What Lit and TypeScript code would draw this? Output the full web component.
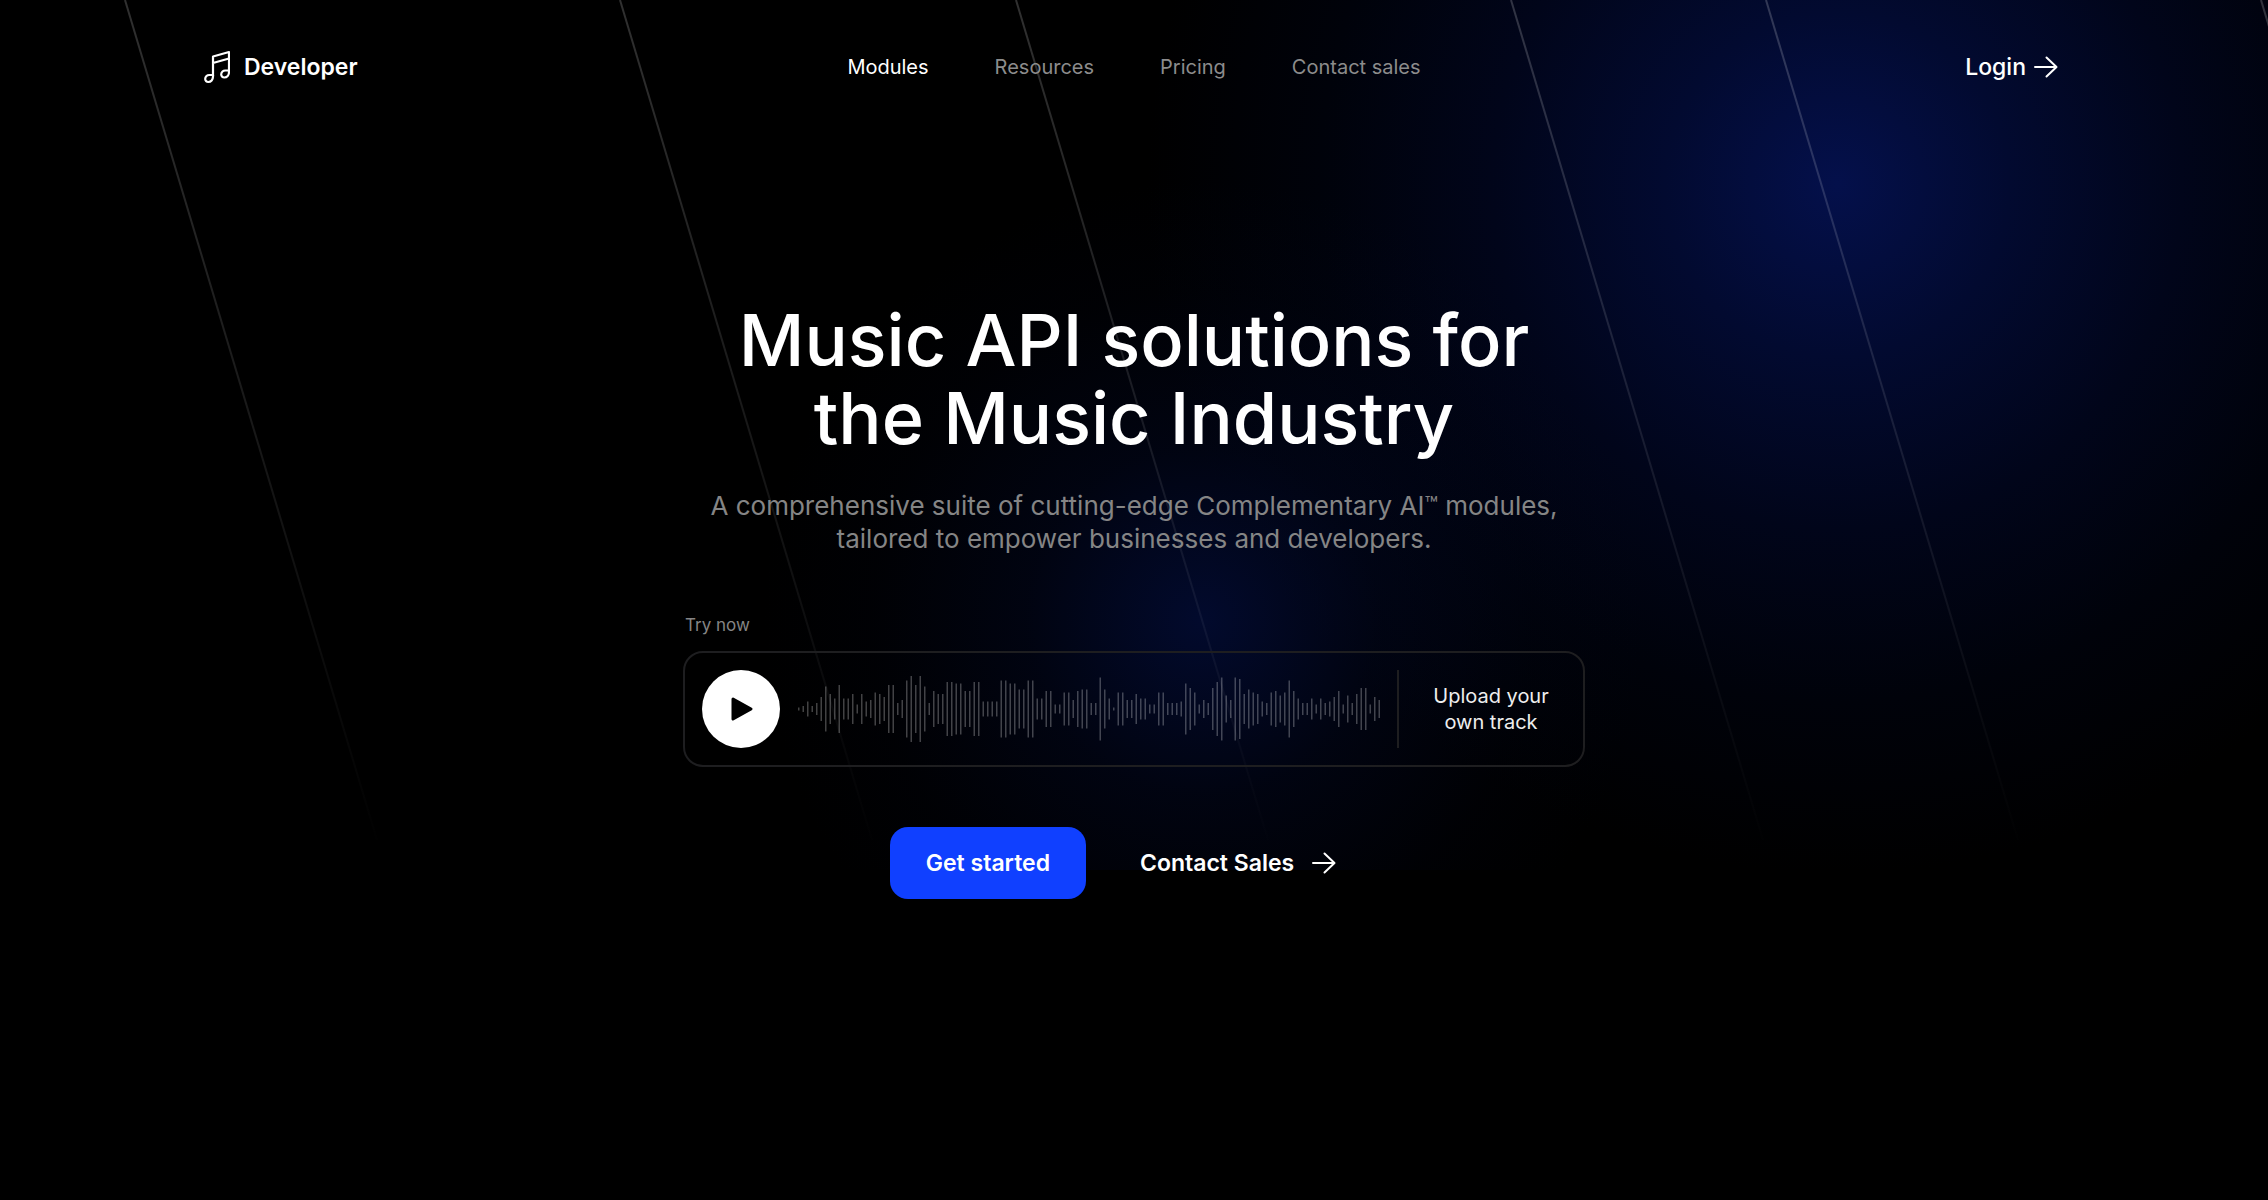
import { LitElement, html, css, svg } from "lit";
import { customElement } from "lit/decorators.js";

const NAV_ITEMS = ["Modules", "Resources", "Pricing", "Contact sales"];

/* Half-heights of the sample track's bars. */
const WAVE = [
  1, 2, 5, 2, 4, 8, 15, 10, 7, 16, 7, 7, 10, 3, 10, 5, 6, 11, 10, 8, 16, 16, 4, 6, 19, 22,
  16, 22, 15, 4, 12, 10, 10, 18, 18, 17, 17, 12, 12, 18, 18, 5, 5, 5, 5, 19, 19, 17, 17, 13,
  13, 19, 19, 7, 7, 12, 12, 3, 3, 11, 11, 6, 12, 13, 13, 4, 4, 21, 13, 7, 1, 11, 11, 6, 6,
  10, 7, 7, 3, 3, 11, 11, 4, 4, 4, 5, 17, 14, 11, 3, 6, 4, 14, 18, 21, 9, 6, 21, 20, 10, 13,
  11, 10, 5, 4, 11, 12, 9, 11, 19, 12, 7, 4, 4, 7, 3, 7, 4, 5, 8, 12, 3, 9, 4, 10, 14, 14, 3,
  8, 6,
];

/* Where each slanted backdrop line meets the top edge. */
const RAYS = [125, 620, 1016, 1511, 1766, 2261];

const arrow = html`<svg class="arrow" viewBox="0 0 36 36" aria-hidden="true">
  <path d="M7 18H28M18.500 8.500L28.500 18L18.500 27.500" fill="none" stroke="currentColor"
    stroke-width="2" stroke-linecap="round" stroke-linejoin="round" />
</svg>`;

@customElement("app-root")
export class AppRoot extends LitElement {
  static styles = css`
    :host {
      display: block;
      font-family: Inter, "Liberation Sans", sans-serif;
      color: #fff;
      background: #000;
    }
    .page {
      position: relative;
      min-height: 100vh;
      overflow: hidden;
    }
    .backdrop {
      position: absolute;
      inset: 0 0 auto 0;
      height: 870px;
      background:
        radial-gradient(circle 440px at 53% 620px, rgba(4, 20, 90, 0.5), rgba(3, 14, 64, 0.26) 40%, rgba(2, 8, 40, 0.1) 75%, transparent),
        radial-gradient(circle 690px at 81% 184px, #04104b, #020a30 25%, #01051a 50%, #00020a 75%, transparent);
    }
    .rays {
      position: absolute;
      top: 0;
      left: 0;
      width: 100%;
      height: 840px;
    }
    .content {
      position: relative;
    }
    .header {
      display: grid;
      grid-template-columns: 1fr auto 1fr;
      align-items: center;
      padding: 49px 204px;
    }
    a {
      color: inherit;
      text-decoration: none;
    }
    .brand {
      display: flex;
      align-items: center;
      gap: 14px;
      font-size: 23px;
      font-weight: 600;
      line-height: 36px;
    }
    .note {
      width: 26px;
      height: 36px;
    }
    .nav {
      display: flex;
      gap: 66px;
      font-size: 20px;
      line-height: 36px;
      color: #8c8c8c;
    }
    .nav .active {
      color: #fff;
    }
    .login {
      justify-self: end;
      display: flex;
      align-items: center;
      gap: 2px;
      font-size: 23px;
      font-weight: 500;
    }
    .arrow {
      width: 36px;
      height: 36px;
    }
    .hero {
      display: flex;
      flex-direction: column;
      align-items: center;
      padding-top: 167px;
      text-align: center;
    }
    h1 {
      margin: 0;
      font-size: 72px;
      font-weight: 500;
      line-height: 78px;
    }
    .lead {
      margin: 32px 0 0;
      font-size: 26px;
      line-height: 33px;
      color: #858585;
    }
    .tm {
      font-size: 22px;
      line-height: 0;
      vertical-align: 3px;
    }
    .player {
      width: 902px;
      max-width: 100%;
      margin-top: 58px;
      text-align: left;
    }
    .label {
      margin: 0 0 14px 2px;
      font-size: 17px;
      line-height: 24px;
      color: #858585;
    }
    .card {
      display: flex;
      align-items: center;
      box-sizing: border-box;
      padding: 17px 0 17px 17px;
      border: 2px solid #1e1e20;
      border-radius: 20px;
    }
    button {
      padding: 0;
      border: 0;
      background: none;
      color: inherit;
      font: inherit;
      cursor: pointer;
    }
    .play {
      display: grid;
      place-items: center;
      flex: none;
      width: 78px;
      height: 78px;
      border-radius: 50%;
      background: #fff;
    }
    .play-icon {
      width: 36px;
      height: 36px;
    }
    .wave {
      flex: 1;
      min-width: 0;
      height: 78px;
      margin: 0 14px 0 18px;
    }
    .upload {
      flex: none;
      width: 186px;
      height: 78px;
      border-left: 2px solid #1e1e20;
      font-size: 20px;
      line-height: 26px;
      color: #eee;
      text-align: center;
    }
    .actions {
      display: flex;
      gap: 18px;
      margin-top: 60px;
      font-size: 23px;
      font-weight: 600;
      line-height: 36px;
    }
    .primary {
      padding: 18px 36px;
      border-radius: 18px;
      background: #1040ff;
    }
    .secondary {
      display: flex;
      align-items: center;
      gap: 12px;
      padding: 18px 36px;
    }
  `;

  render() {
    return html`
      <div class="page">
        <div class="backdrop"></div>
        <svg class="rays" aria-hidden="true">
          <defs>
            <linearGradient id="fade" gradientUnits="userSpaceOnUse" x1="0" y1="0" x2="0" y2="860">
              <stop offset="0" stop-color="#fff" stop-opacity="0.19" />
              <stop offset="1" stop-color="#fff" stop-opacity="0" />
            </linearGradient>
          </defs>
          ${RAYS.map((x) => svg`<path d="M${x} 0l252 840" stroke="url(#fade)" stroke-width="2" />`)}
        </svg>
        <div class="content">
          <header class="header">
            <a class="brand" href="#">
              <svg class="note" viewBox="0 0 26 36" fill="none" stroke="#fff" stroke-width="2.2"
                stroke-linejoin="round" aria-hidden="true">
                <path d="M9 27V7.500L25 3V22.500M9 14L25 9.500" />
                <path d="M9 26H5.500A4 4 0 0 0 1.200 30A3 3 0 0 0 4.300 33C7 33 9 30.800 9 27.500Z" />
                <path d="M25 21.500H21.500A4 4 0 0 0 17.200 25.500A3 3 0 0 0 20.300 28.500C23 28.500 25 26.300 25 23Z" />
              </svg>
              Developer
            </a>
            <nav class="nav">
              ${NAV_ITEMS.map((item, i) => html`<a class=${i === 0 ? "active" : ""} href="#">${item}</a>`)}
            </nav>
            <a class="login" href="#">Login ${arrow}</a>
          </header>
          <main class="hero">
            <h1>Music API solutions for<br />the Music Industry</h1>
            <p class="lead">
              A comprehensive suite of cutting-edge Complementary AI<span class="tm">™</span> modules,<br />tailored
              to empower businesses and developers.
            </p>
            <section class="player">
              <p class="label">Try now</p>
              <div class="card">
                <button class="play" aria-label="Play">
                  <svg class="play-icon" viewBox="0 0 36 36" aria-hidden="true">
                    <path d="M10 8L28 18L10 28Z" fill="#000" stroke="#000" stroke-width="3" stroke-linejoin="round" />
                  </svg>
                </button>
                <svg class="wave" viewBox="0 0 390 44" aria-hidden="true">
                  ${WAVE.map((h, i) => svg`<rect x=${i * 3} y=${22 - h} width="1" height=${h * 2} fill="#fff" fill-opacity="0.26" />`)}
                </svg>
                <button class="upload">Upload your<br />own track</button>
              </div>
            </section>
            <div class="actions">
              <button class="primary">Get started</button>
              <a class="secondary" href="#">Contact Sales ${arrow}</a>
            </div>
          </main>
        </div>
      </div>
    `;
  }
}
